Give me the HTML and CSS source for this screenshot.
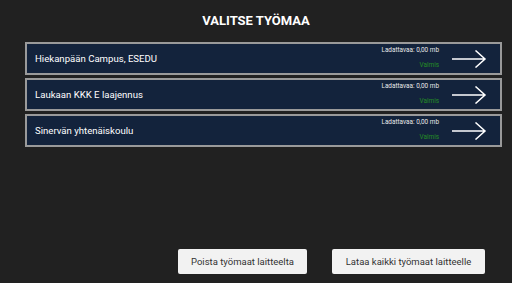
FILE: index.html
```html
<!DOCTYPE html>
<html lang="fi">
<head>
<meta charset="utf-8">
<link rel="stylesheet" href="styles.css">
</head>
<body>
<div class="app">
  <h1 class="title">VALITSE TYÖMAA</h1>
  <div class="list">
    <div class="row">
      <span class="name">Hiekanpään Campus, ESEDU</span>
      <div class="status"><span class="size">Ladattavaa: 0,00 mb</span><span class="state">Valmis</span></div>
      <svg class="arrow" viewBox="0 0 35 18" width="35" height="18"><path d="M0 9H33M23.5 0.5L33 9L23.5 17.5" fill="none" stroke="#fff" stroke-width="1.5"/></svg>
    </div>
    <div class="row">
      <span class="name">Laukaan KKK E laajennus</span>
      <div class="status"><span class="size">Ladattavaa: 0,00 mb</span><span class="state">Valmis</span></div>
      <svg class="arrow" viewBox="0 0 35 18" width="35" height="18"><path d="M0 9H33M23.5 0.5L33 9L23.5 17.5" fill="none" stroke="#fff" stroke-width="1.5"/></svg>
    </div>
    <div class="row">
      <span class="name">Sinervän yhtenäiskoulu</span>
      <div class="status"><span class="size">Ladattavaa: 0,00 mb</span><span class="state">Valmis</span></div>
      <svg class="arrow" viewBox="0 0 35 18" width="35" height="18"><path d="M0 9H33M23.5 0.5L33 9L23.5 17.5" fill="none" stroke="#fff" stroke-width="1.5"/></svg>
    </div>
  </div>
  <div class="actions">
    <button class="btn btn-remove">Poista työmaat laitteelta</button>
    <button class="btn btn-load">Lataa kaikki työmaat laitteelle</button>
  </div>
</div>
</body>
</html>
```
FILE: styles.css
```css
html, body {
  margin: 0;
  padding: 0;
  background: #212121;
}
body {
  font-family: Roboto, "Liberation Sans", sans-serif;
  color: #fff;
}
.app {
  height: 283px;
  display: flex;
  flex-direction: column;
}
.title {
  margin: 0;
  padding-top: 13px;
  font-size: 13px;
  font-weight: 700;
  line-height: 16px;
  text-align: center;
}
.list {
  margin: 13px 10px 0 25px;
  display: flex;
  flex-direction: column;
  gap: 3px;
}
.row {
  height: 29px;
  border: 2px solid #9a9a9a;
  background: #13233c;
  display: flex;
  align-items: center;
  padding: 0 13px 0 8px;
}
.name {
  flex: 1;
  font-size: 9.6px;
}
.status {
  display: flex;
  flex-direction: column;
  align-items: flex-end;
  gap: 8px;
  font-size: 6.4px;
  line-height: 7px;
  margin-right: 13px;
  margin-top: -1px;
}
.size {
  color: #e8e8e8;
}
.state {
  color: #249024;
}
.arrow {
  display: block;
}
.actions {
  margin-top: auto;
  margin-bottom: 9px;
  display: flex;
  justify-content: flex-end;
  gap: 25px;
  padding-right: 27px;
}
.btn {
  height: 25px;
  border: none;
  border-radius: 2px;
  background: #f2f2f2;
  color: #333;
  font-family: Roboto, "Liberation Sans", sans-serif;
  font-size: 9.5px;
  padding: 0;
}
.btn-remove {
  width: 129px;
}
.btn-load {
  width: 153px;
}
```
